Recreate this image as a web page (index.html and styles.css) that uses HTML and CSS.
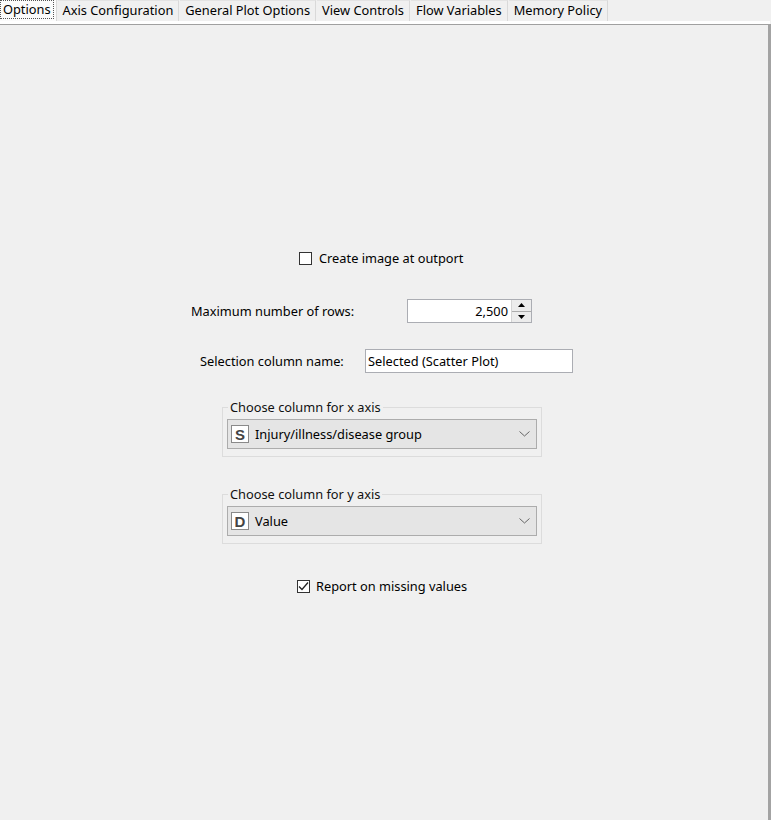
FILE: index.html
```html
<!DOCTYPE html>
<html lang="en">
<head>
  <meta charset="UTF-8">
  <title>Scatter Plot - Options</title>
  <link rel="stylesheet" href="styles.css">
</head>
<body>
  <div class="tabs">
    <div class="tab selected"><span class="focus">Options</span></div>
    <div class="tab">Axis Configuration</div>
    <div class="tab">General Plot Options</div>
    <div class="tab">View Controls</div>
    <div class="tab">Flow Variables</div>
    <div class="tab">Memory Policy</div>
  </div>
  <div class="tab-line"></div>
  <div class="panel">
    <!-- checkbox row -->
    <label class="check-row first">
      <span class="checkbox"></span>
      <span>Create image at outport</span>
    </label>

    <div class="field-row rows">
      <span class="field-label">Maximum number of rows:</span>
      <div class="spinner">
        <span class="spinner-value">2,500</span>
        <div class="spinner-buttons">
          <span class="spin-btn up"><svg width="7" height="4" viewBox="0 0 7 4"><path d="M0 4 L3.5 0 L7 4 Z" fill="#000"/></svg></span>
          <span class="spin-btn down"><svg width="7" height="4" viewBox="0 0 7 4"><path d="M0 0 L3.5 4 L7 0 Z" fill="#000"/></svg></span>
        </div>
      </div>
    </div>

    <div class="field-row selection">
      <span class="field-label">Selection column name:</span>
      <div class="text-input">Selected (Scatter Plot)</div>
    </div>

    <fieldset class="group first-group">
      <legend>Choose column for x axis</legend>
      <div class="combo">
        <span class="type-icon">S</span>
        <span class="combo-text">Injury/illness/disease group</span>
        <svg class="chevron" width="11" height="6" viewBox="0 0 11 6"><path d="M0.5 0.5 L5.5 5 L10.5 0.5" fill="none" stroke="#666" stroke-width="1"/></svg>
      </div>
    </fieldset>

    <fieldset class="group second-group">
      <legend>Choose column for y axis</legend>
      <div class="combo">
        <span class="type-icon">D</span>
        <span class="combo-text">Value</span>
        <svg class="chevron" width="11" height="6" viewBox="0 0 11 6"><path d="M0.5 0.5 L5.5 5 L10.5 0.5" fill="none" stroke="#666" stroke-width="1"/></svg>
      </div>
    </fieldset>

    <label class="check-row last">
      <span class="checkbox checked"><svg width="11" height="11" viewBox="0 0 11 11"><path d="M1 5.5 L4 8.5 L10 1.5" fill="none" stroke="#222" stroke-width="1.3"/></svg></span>
      <span>Report on missing values</span>
    </label>
  </div>
</body>
</html>
```

FILE: styles.css
```css
/* look of an old Swing dialog on Windows */
body {
  margin: 0;
  padding: 0;
  background: #f0f0f0;
  font-family: 'Noto Sans', 'Liberation Sans', sans-serif;
  font-size: 12.8px;
  color: #000;
  height: 820px;
  overflow: hidden;
}
.tabs {
  display: flex;
  height: 21px;
  align-items: flex-end;
}
.tab {
  height: 20px;
  line-height: 19px;
  padding: 0 5px;
  margin-right: 1px;
  border-right: 1px solid #d9d9d9;
  border-top: 1px solid #e3e3e3;
  background: #f0f0f0;
  white-space: nowrap;
}
.tab.selected {
  height: 21px;
  background: #fbfbfb;
  padding: 0 2px 0 0;
  border-top: none;
}
.tab .focus {
  display: inline-block;
  line-height: 17px;
  padding: 0 2px;
  border: 1px dotted #555;
}
.tab-line {
  height: 3px;
  margin-right: 1px;
  background: #fff;
}
.panel {
  height: 800px;
  border-top: 1px solid #a0a0a0;
  border-right: 3px solid #a3a3a3;
  background: #f0f0f0;
  display: flex;
  flex-direction: column;
}
.check-row {
  display: flex;
  align-items: center;
  gap: 7px;
  height: 16px;
}
.check-row.first {
  margin: 225px 0 0 299px;
}
.check-row.last {
  margin: 34px 0 0 297px;
  gap: 6px;
}
.checkbox {
  width: 13px;
  height: 13px;
  border: 1px solid #333;
  background: #fff;
  box-sizing: border-box;
  display: flex;
  align-items: center;
  justify-content: center;
}
.field-row {
  display: flex;
  align-items: center;
}
.field-row.rows {
  margin: 33px 0 0 191px;
}
.field-row.rows .field-label {
  width: 216px;
}
.field-row.selection {
  margin: 26px 0 0 200px;
}
.field-row.selection .field-label {
  width: 165px;
}
.spinner {
  width: 125px;
  height: 24px;
  box-sizing: border-box;
  border: 1px solid #abadb3;
  background: #fff;
  display: flex;
}
.spinner-value {
  flex: 1;
  text-align: right;
  line-height: 22px;
  padding-right: 3px;
}
.spinner-buttons {
  width: 19px;
  display: flex;
  flex-direction: column;
  border-left: 1px solid #d4d4d4;
}
.spin-btn {
  flex: 1;
  display: flex;
  align-items: center;
  justify-content: center;
  background: #ececec;
}
.spin-btn.up {
  border-bottom: 1px solid #acacac;
}
.text-input {
  width: 208px;
  height: 24px;
  box-sizing: border-box;
  border: 1px solid #abadb3;
  background: #fff;
  line-height: 22px;
  padding-left: 2px;
}
.group {
  width: 320px;
  box-sizing: border-box;
  margin: 0 0 0 222px;
  padding: 5px 4px 7px;
  border: 1px solid #dcdcdc;
  border-radius: 0;
}
.group legend {
  padding: 0 2px;
  margin-left: 1px;
  line-height: 14px;
  color: #111;
}
.first-group {
  margin-top: 27px;
}
.second-group {
  margin-top: 30px;
}
.combo {
  height: 30px;
  box-sizing: border-box;
  border: 1px solid #acacac;
  background: #e5e5e5;
  display: flex;
  align-items: center;
  padding: 0 6px 0 3px;
}
.type-icon {
  width: 18px;
  height: 18px;
  box-sizing: border-box;
  border: 1px solid #8a8a8a;
  background: #fff;
  font-family: 'Liberation Sans', sans-serif;
  font-weight: bold;
  font-size: 15px;
  color: #444;
  display: flex;
  align-items: center;
  justify-content: center;
  margin-right: 6px;
}
.combo-text {
  flex: 1;
}
.chevron {
  display: block;
}
```
